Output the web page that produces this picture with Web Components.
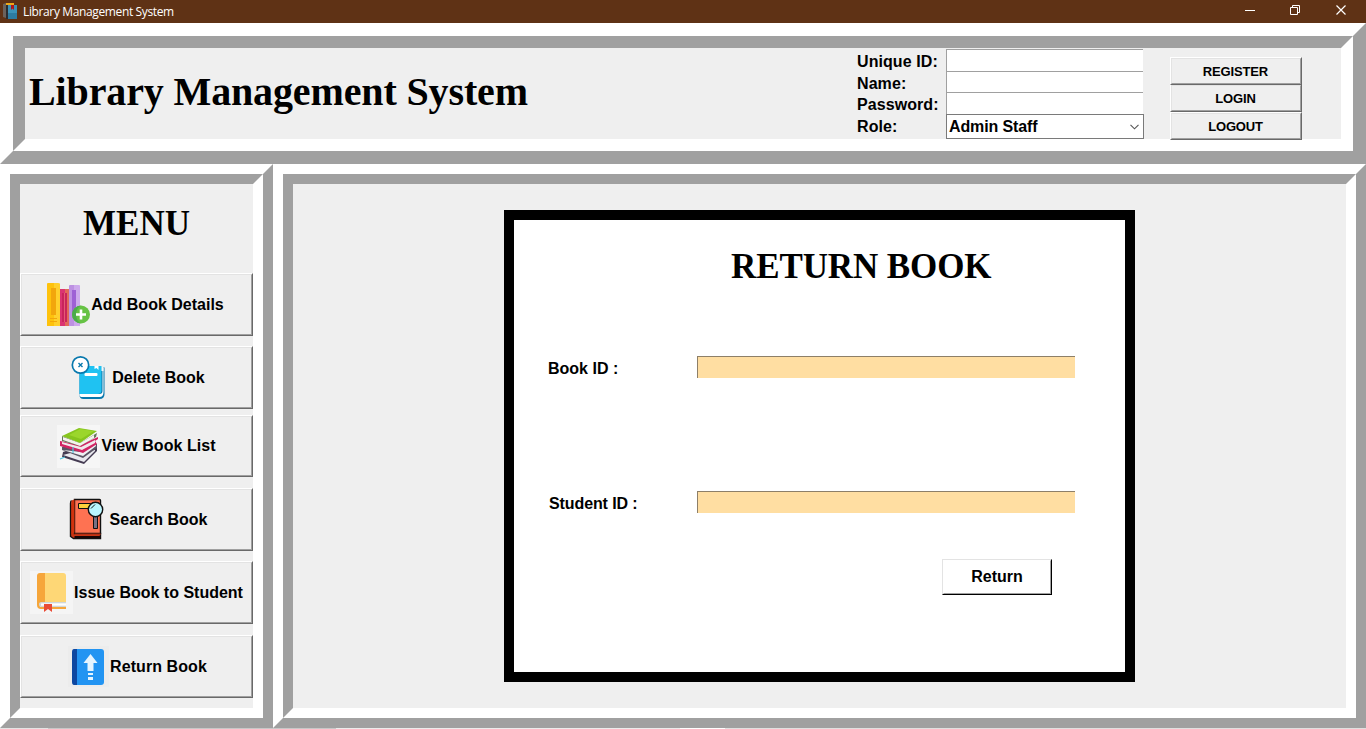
<!DOCTYPE html>
<html lang="en">
<head>
<meta charset="utf-8">
<title>Library Management System</title>
<style>
html,body{margin:0;height:729px;overflow:hidden;background:#efefef}
body{font:bold 16px/18px "Liberation Sans",Arial,sans-serif;color:#000}
</style>
</head>
<body>
<library-app></library-app>
<script>
const define = (name, html, setup) => {
  const t = document.createElement('template');
  t.innerHTML = html;
  customElements.define(name, class extends HTMLElement {
    constructor() {
      super();
      this.attachShadow({ mode: 'open' }).appendChild(t.content.cloneNode(true));
    }
    connectedCallback() { if (setup) setup(this, this.shadowRoot); }
  });
};

/* Title bar of the desktop window */
define('title-bar', `
<style>
:host{display:flex;height:23px;background:#5f3215;color:#fff;align-items:center;font:12px/16px "Open Sans","Noto Sans",sans-serif}
.app{width:16px;height:17px;margin:0 4px 1px 3px}
.name{flex:1;padding-top:1px;letter-spacing:-.37px;white-space:nowrap}
.ctl{width:12px;height:12px;margin-right:34px;margin-bottom:3px}
.ctl.min{margin-right:33px}
.ctl:last-child{margin-right:19px}
</style>
<svg class="app" viewBox="0 0 16 17"><path d="M0 1l3-1v15l-3-1z" fill="#6b625c"/><path d="M3 1h3v15H3z" fill="#2a2d31"/><path d="M5 2h9v14H5z" fill="#3c93b8"/><path d="M5 10h9v6H5z" fill="#2d7ca2"/><path d="M3 0h8v2H3z" fill="#f0a818"/><path d="M8 2h3v5L9.500 5.500 8 7z" fill="#b5141c"/></svg>
<span class="name"><slot></slot></span>
<svg class="ctl min" viewBox="0 0 12 12"><path d="M1 6.500h10" stroke="#fff"/></svg>
<svg class="ctl" viewBox="0 0 12 12"><path d="M1.500 3.500h7v7h-7zM3.500 3.500v-2h7v7h-2" fill="none" stroke="#fff"/></svg>
<svg class="ctl" viewBox="0 0 12 12"><path d="M1.500 1.500l9 9M10.500 1.500l-9 9" stroke="#fff" stroke-width="1.200"/></svg>
`);

/* Double ridge frame; --o and --i are the two bevel widths */
define('ridge-frame', `
<style>
:host{display:block;box-sizing:border-box;border:var(--o) solid;border-color:#fff #a0a0a0 #a0a0a0 #fff}
.in{box-sizing:border-box;height:100%;border:var(--i) solid;border-color:#a0a0a0 #fff #fff #a0a0a0;background:#efefef}
</style>
<div class="in"><slot></slot></div>`);

/* Raised push button */
define('raised-button', `
<style>
:host{display:block;box-sizing:border-box;border:1px solid;border-color:var(--hi,#fff) var(--dark,#696969) var(--dark,#696969) var(--hi,#fff);background:var(--face,#efefef)}
.in{box-sizing:border-box;height:100%;display:flex;align-items:center;justify-content:center;gap:1px;border:1px solid;border-color:var(--hi2,#e3e3e3) #a0a0a0 #a0a0a0 var(--hi2,#e3e3e3);padding:var(--nudge,0);white-space:nowrap}
</style>
<div class="in"><slot name="icon"></slot><slot></slot></div>`);

/* Sunken text entry */
define('text-entry', `
<style>
:host{display:block;box-sizing:border-box;background:var(--fill,#fff);border:solid var(--edge,#a0a0a0);border-width:1px 0 0 1px}
</style>`);

define('combo-box', `
<style>
:host{display:flex;box-sizing:border-box;align-items:center;justify-content:space-between;background:#fff;border:1px solid #7a7a7a;padding:0 4px 0 2px}
span{padding-top:1px;letter-spacing:-.12px}
svg{width:9px;height:6px;margin-top:1px}
</style>
<span><slot></slot></span><svg viewBox="0 0 9 6"><path d="M.5 .8l4 4 4-4" fill="none" stroke="#555" stroke-width="1.100"/></svg>`);

define('login-panel', `
<style>
:host{display:flex;height:91px}
h1{margin:0;flex:1;padding:22px 0 0 4px;font:bold 40px/44px "Liberation Serif","Times New Roman",serif;white-space:nowrap;letter-spacing:-.13px}
.form{display:grid;grid-template-columns:89px 198px;grid-template-rows:22px 21px 22px 25px;padding-top:1px;align-items:stretch}
.form span{padding-top:4px;letter-spacing:.08px}
text-entry{margin-right:1px}
.btns{width:132px;margin:9px 39px 0 26px;display:flex;flex-direction:column;font-size:13px;line-height:15px;letter-spacing:-.15px}
raised-button{height:28px;flex:none;--nudge:0 1px 0 0}
.low{margin-top:-1px}
.top{position:relative;z-index:1}
</style>
<h1>Library Management System</h1>
<div class="form">
<span>Unique ID:</span><text-entry></text-entry>
<span>Name:</span><text-entry></text-entry>
<span>Password:</span><text-entry></text-entry>
<span>Role:</span><combo-box>Admin Staff</combo-box>
</div>
<div class="btns"><raised-button class="top">REGISTER</raised-button><raised-button class="low">LOGIN</raised-button><raised-button>LOGOUT</raised-button></div>`);

const icons = {
add: `<g transform="translate(-1 0)"><path d="M1 1q0-1 1-1h6v43H1z" fill="#fec20c"/><path d="M8 0h4q2 0 2 1v42H8z" fill="#ffd02c"/><path d="M5 5h5v27H5zM4 35h7v1H4zM4 38h7v1H4z" fill="#f2a60c"/><path d="M14 6h5v37h-5z" fill="#db3472"/><path d="M19 6h4v37h-4z" fill="#e26a58"/><path d="M16 10h5v29h-5z" fill="#c8255c"/><path d="M18.500 10v29" stroke="#e75a76"/><path d="M23 3q0-1 1-1h4v41h-5z" fill="#bd91e2"/><path d="M28 2h5q1 0 1 1v40h-6z" fill="#cda9ec"/><path d="M26 7h4v25h-4z" fill="#9e60d5"/><circle cx="35" cy="31.500" r="9" fill="#66c244"/><path d="M35 22.500a9 9 0 0 0 0 18q-5-3-5-9t5-9z" fill="#4cab4c"/><path d="M30 31.500h10M35 26.500v10" stroke="#fff" stroke-width="2.600"/></g>`,
del: `<g transform="translate(3.500 0)"><path d="M8 15h24V11q1 0 1 1v26q0 5-5 5H12q-4 0-4-4z" fill="#0878ad"/><path d="M8 38h20q3 0 3-3V11l1 .5V36q0 5-4 5H11q-3 0-3-2z" fill="#fff"/><path d="M8 14q0-4 4-4h18v24q0 4-4 4H8z" fill="#1fc2f2"/><path d="M23 10v3l2-1 2 2v-4z" fill="#fff"/><rect x="13" y="17" width="13" height="3" rx="1" fill="#fff"/><circle cx="9" cy="9" r="8.200" fill="#fff" stroke="#0878ad" stroke-width="1.700"/><path d="M7 7l4 4M11 7l-4 4" stroke="#0878ad" stroke-width="1.400"/></g>`,
view: `<rect width="43" height="43" fill="#f6f6f6"/><path d="M5 32l22 7 13-13v-4L20 22 6 27z" fill="#443b52"/><path d="M6 30l21 7 11-11v-1L21 26z" fill="#e8e8ee"/><path d="M5 25l21 8 14-10v-4L20 18 5 22z" fill="#5a5564"/><path d="M6 25l20 6 13-10-1-3-14 9z" fill="#eef0f4"/><path d="M3 16l20 4 18-8v2l-3 2 2 3-14 9-23-7z" fill="#d22463"/><path d="M5 19l20 6 13-7v-3l-14 7-19-5z" fill="#f1e8ec"/><path d="M5 11l18 7 17-10-1 4-16 9L5 16z" fill="#65785a"/><path d="M6 12l17 6 14-8v3l-14 8-17-6z" fill="#f4f3ee"/><path d="M5 11L22 3l18 3-17 12z" fill="#86c51e"/><path d="M12 10l11-6 14 2-13 8z" fill="#9bd62c"/><path d="M16 22v6M8 32l-5 2" stroke="#50c4df" stroke-width="1.200"/>`,
search: `<g transform="translate(1.500 .5)"><path d="M4 2q-1 1-1 3v33l3 2h27V35H7" fill="#c93312" stroke="#111" stroke-width="1.400"/><path d="M7 1h25q1 0 1 1v33H7z" fill="#fe7252" stroke="#111" stroke-width="1.400"/><path d="M4 2l3-1v33l-3 2z" fill="#d0320d"/><path d="M11 5h12v5H11z" fill="#ffd13b" stroke="#111"/><path d="M7 35h26v1.500H7z" fill="#b52e12"/><path d="M7 37.500h26v2H7z" fill="#180606"/><path d="M26 18h4v12h-4z" fill="#777083" stroke="#111"/><circle cx="28" cy="11" r="7.200" fill="#b9f6ff" stroke="#111" stroke-width="1.400"/><path d="M23.500 10l4-4" stroke="#111"/></g>`,
issue: `<rect width="43" height="43" fill="#f5f5f5"/><path d="M7 5q0-3 3-3h5v29h-4l-1 5h26v2H11q-4 0-4-4z" fill="#f6a63b"/><path d="M15 2h18q3 0 3 3v26H15z" fill="#fed776"/><path d="M9 33q0-2 3-2h24v1.500H12l-1 2h25V36H11q-2 0-2-3z" fill="#cfd6da"/><path d="M11 32.500h25v2H11z" fill="#fff"/><path d="M14 33h8v8l-4-3-4 3z" fill="#e94c36"/>`,
ret: `<rect width="41" height="41" fill="#ececec"/><path d="M4 6q0-3 2-3h4v36H6q-2 0-2-3z" fill="#0d47a1"/><path d="M9 3h24q3 0 3 3v30q0 3-3 3H9z" fill="#2294f2"/><path d="M22.500 8l7 9h-4v8h-6v-8h-4zM20 27h5v2h-5zM20 31h5v3h-5z" fill="#e5f4ff"/>`
};
define('book-icon', `<style>:host{display:block;flex:none}svg{display:block;overflow:visible}</style><svg></svg>`, (el, root) => {
  const n = el.getAttribute('kind'), s = n === 'ret' ? 41 : 43, svg = root.querySelector('svg');
  svg.setAttribute('viewBox', `0 0 ${s} ${s}`);
  svg.setAttribute('width', s); svg.setAttribute('height', s);
  svg.innerHTML = icons[n];
});

define('side-menu', `
<style>
:host{display:flex;flex-direction:column}
h2{margin:0;height:89px;box-sizing:border-box;padding-top:20px;text-align:center;font:bold 35px/40px "Liberation Serif","Times New Roman",serif}
raised-button{height:63px;margin-bottom:10px}
.first{--nudge:0 2px 0 0}
.near{margin-bottom:6px}.short{height:62px;margin-bottom:11px;letter-spacing:.04px}.gap{margin-bottom:11px}
.last{letter-spacing:.08px;--nudge:0 0 0 2px}
</style>
<h2>MENU</h2>
<raised-button class="first"><book-icon slot="icon" kind="add"></book-icon>Add Book Details</raised-button>
<raised-button class="near"><book-icon slot="icon" kind="del"></book-icon>Delete Book</raised-button>
<raised-button class="short"><book-icon slot="icon" kind="view"></book-icon>View Book List</raised-button>
<raised-button><book-icon slot="icon" kind="search"></book-icon>Search Book</raised-button>
<raised-button class="gap"><book-icon slot="icon" kind="issue"></book-icon>Issue Book to Student</raised-button>
<raised-button class="last"><book-icon slot="icon" kind="ret"></book-icon>Return Book</raised-button>`);

define('return-form', `
<style>
:host{display:block;box-sizing:border-box;width:631px;height:472px;border:10px solid #000;background:#fff}
h2{margin:0;padding:27px 0 0 217px;font:bold 35px/40px "Liberation Serif","Times New Roman",serif;white-space:nowrap;letter-spacing:-.1px}
.row{display:flex;height:22px;padding-left:34px}
.row span{width:149px;padding-top:4px;box-sizing:border-box;white-space:nowrap}
.book{margin-top:69px}.student{margin-top:113px}.student span{text-indent:1px;letter-spacing:-.1px}
text-entry{width:378px;--fill:#ffdea2;--edge:#8d7f68}
raised-button{width:110px;height:36px;margin:46px 0 0 428px;--hi:#e3e3e3;--hi2:#fff;--dark:#000;--face:#fff}
</style>
<h2>RETURN BOOK</h2>
<div class="row book"><span>Book ID :</span><text-entry></text-entry></div>
<div class="row student"><span>Student ID :</span><text-entry></text-entry></div>
<raised-button>Return</raised-button>`);

define('library-app', `
<style>
:host{display:flex;flex-direction:column;width:1366px;height:729px}
.head{height:141px;--o:13px;--i:12px}
.body{display:flex;height:564px}
.menu{width:273px;--o:10px;--i:10px}
.main{flex:1;--o:10px;--i:10px}
return-form{margin:26px 0 0 211px}
.edge{height:1px;background:linear-gradient(90deg,#e4e4e4 48px,#c8c8c8 48px 336px,#ececec 336px 680px,#fff 680px 725px,#e0e0e0 725px)}
</style>
<title-bar>Library Management System</title-bar>
<ridge-frame class="head"><login-panel></login-panel></ridge-frame>
<div class="body">
<ridge-frame class="menu"><side-menu></side-menu></ridge-frame>
<ridge-frame class="main"><return-form></return-form></ridge-frame>
</div>
<div class="edge"></div>`);
</script>
</body>
</html>
